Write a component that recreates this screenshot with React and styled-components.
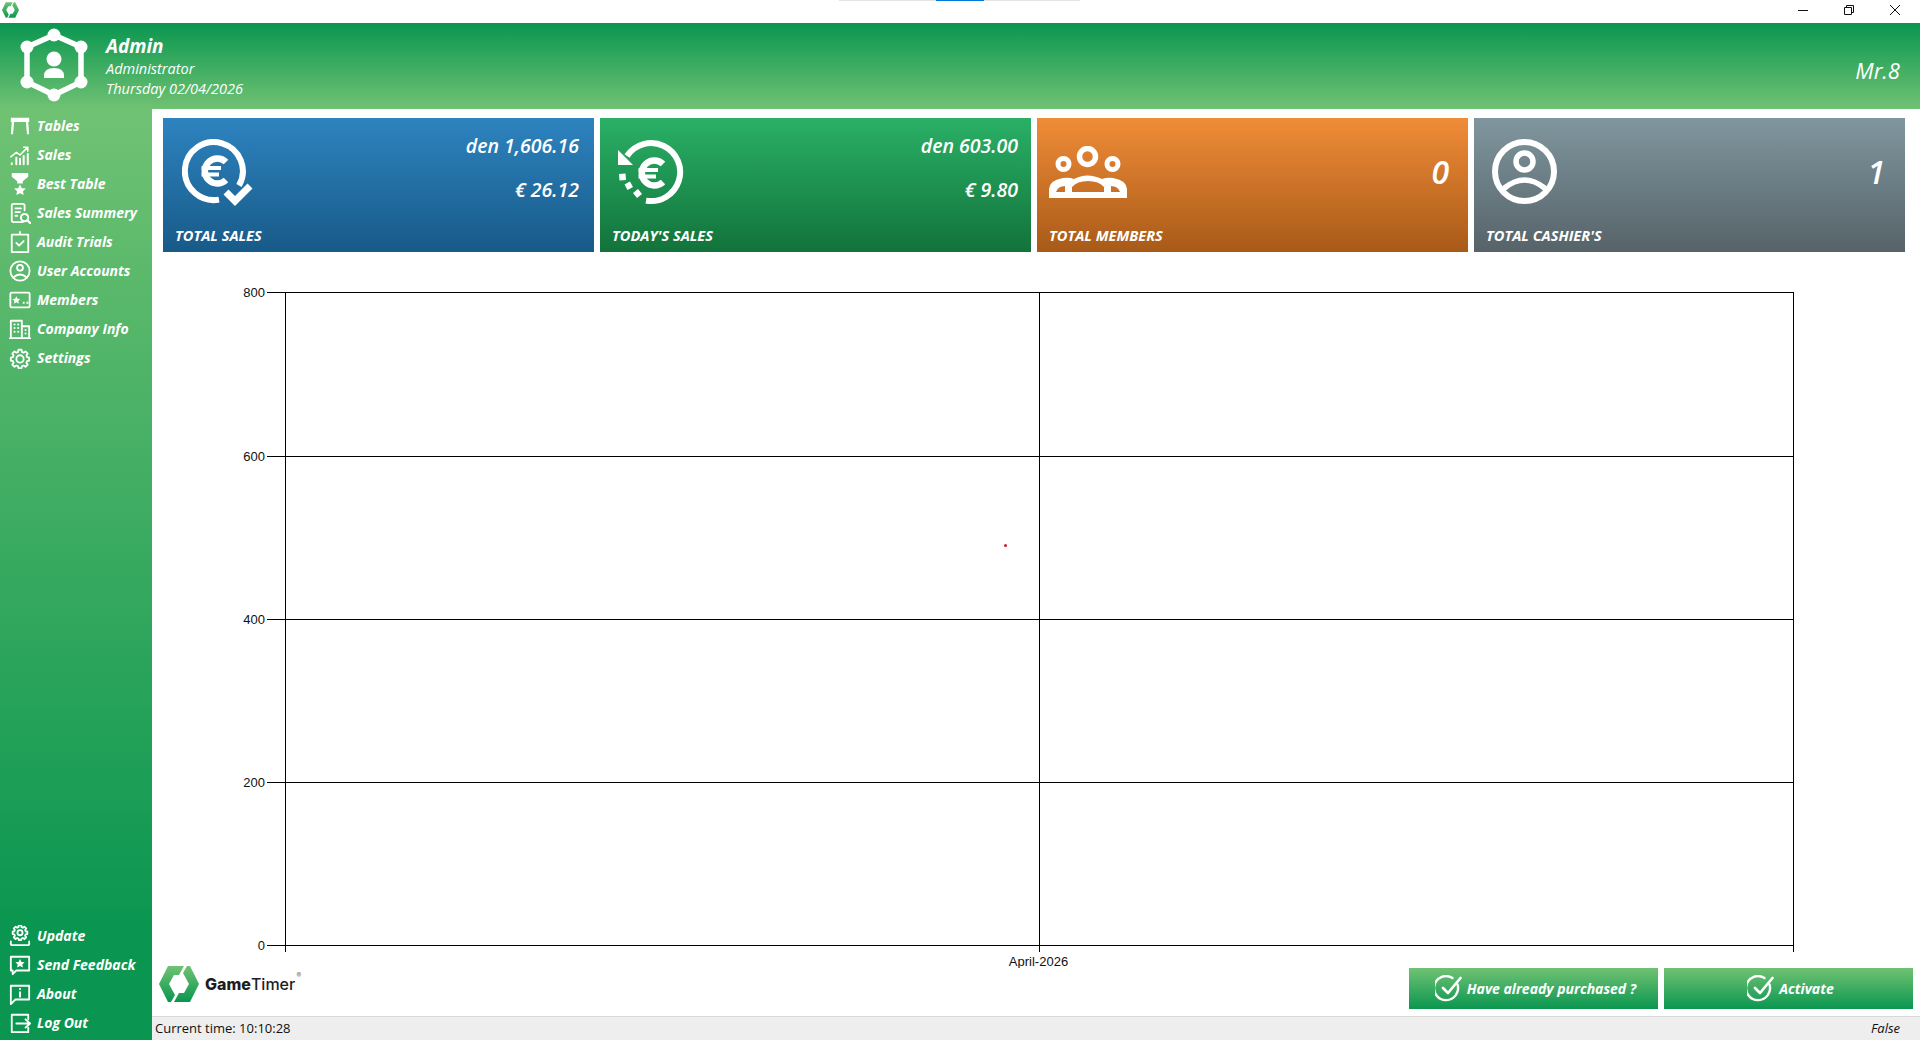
import React from "react";
import styled, { createGlobalStyle } from "styled-components";

const UI_FONT = `"Open Sans", "Noto Sans", sans-serif`;

const GlobalStyle = createGlobalStyle`
  html, body {
    margin: 0;
    padding: 0;
    height: 100%;
    overflow: hidden;
    background: #fff;
  }
  * {
    box-sizing: border-box;
  }
`;

const Page = styled.div`
  width: 1920px;
  height: 1040px;
  display: flex;
  flex-direction: column;
  font-family: ${UI_FONT};
  color: #fff;
`;

const TitleBar = styled.div`
  position: relative;
  flex: 0 0 23px;
  display: flex;
  align-items: flex-start;
  justify-content: space-between;
  padding: 2px 2px 0;
  background: #fff;
`;

const TopStrip = styled.div`
  position: absolute;
  top: 0;
  left: 839px;
  width: 241px;
  height: 1px;
  display: flex;
  justify-content: center;
  background: #e4e4e4;
`;

const TopStripActive = styled.div`
  width: 48px;
  height: 1px;
  background: #0078d7;
`;

const WindowControls = styled.div`
  display: flex;
  margin-top: -2px;
`;

const WindowButton = styled.div`
  width: 46px;
  height: 20px;
  display: flex;
  align-items: center;
  justify-content: center;
`;

const Header = styled.header`
  flex: 0 0 86px;
  display: flex;
  align-items: flex-start;
  padding: 5px 20px 0 20px;
  background: linear-gradient(#0a9650, #70c273);
`;

const UserInfo = styled.div`
  display: flex;
  flex-direction: column;
  margin-left: 18px;
  padding-top: 5px;
`;

const UserName = styled.div`
  font-size: 19px;
  line-height: 26px;
  font-weight: 700;
  font-style: italic;
`;

const UserLine = styled.div`
  font-size: 14.5px;
  line-height: 20px;
  font-style: italic;
`;

const Brand = styled.div`
  margin-left: auto;
  margin-top: 28px;
  font-size: 22px;
  line-height: 28px;
  font-style: italic;
`;

const Body = styled.div`
  flex: 1;
  display: flex;
  min-height: 0;
`;

const Sidebar = styled.nav`
  flex: 0 0 152px;
  display: flex;
  flex-direction: column;
  justify-content: space-between;
  padding: 2px 0 3px;
  background: linear-gradient(#70c273, #0a9650 88%);
`;

const NavGroup = styled.div`
  display: flex;
  flex-direction: column;
`;

const NavItem = styled.div`
  height: 29px;
  display: flex;
  align-items: center;
  gap: 6px;
  padding-left: 9px;
  font-size: 14px;
  font-weight: 700;
  font-style: italic;
  white-space: nowrap;
`;

const Main = styled.main`
  flex: 1;
  min-width: 0;
  display: flex;
  flex-direction: column;
  background: #fff;
`;

const Cards = styled.section`
  flex: 0 0 143px;
  display: grid;
  grid-template-columns: repeat(4, 431px);
  gap: 6px;
  padding: 9px 0 0 11px;
`;

const Card = styled.div`
  display: flex;
  flex-direction: column;
  justify-content: space-between;
  padding: 21px ${(p) => p.$right}px 8px 12px;
  background: linear-gradient(${(p) => p.$from}, ${(p) => p.$to});
`;

const CardTop = styled.div`
  display: flex;
  justify-content: space-between;
  align-items: flex-start;
`;

const CardIcon = styled.div`
  margin-left: ${(p) => p.$left}px;
  margin-top: ${(p) => p.$top || 0}px;
  display: flex;
`;

const Values = styled.div`
  display: flex;
  flex-direction: column;
  align-items: flex-end;
  gap: 20px;
  margin-top: -5px;
`;

const Amount = styled.div`
  font-size: 19.5px;
  line-height: 24px;
  font-weight: 600;
  font-style: italic;
`;

const BigValue = styled.div`
  margin-top: 15px;
  font-size: 32px;
  line-height: 36px;
  font-weight: 600;
  font-style: italic;
`;

const CardLabel = styled.div`
  font-size: 14.6px;
  line-height: 18px;
  font-weight: 700;
  font-style: italic;
`;

const ChartArea = styled.div`
  flex: 1;
  min-height: 0;
  display: flex;
`;

const Footer = styled.div`
  flex: 0 0 48px;
  display: flex;
  align-items: flex-start;
  padding: 0 7px 0 7px;
`;

const Logo = styled.div`
  display: flex;
  align-items: center;
  margin-top: -2px;
`;

const LogoName = styled.div`
  position: relative;
  margin-left: 6px;
  font-family: Inter, "Open Sans", sans-serif;
  font-size: 16px;
  line-height: 20px;
  color: #1d1d1f;
  font-weight: 500;
`;

const LogoStrong = styled.span`
  font-weight: 800;
`;

const LogoMark = styled.span`
  position: absolute;
  top: -3px;
  right: -6px;
  font-size: 7px;
  line-height: 10px;
  color: #777;
`;

const Actions = styled.div`
  margin-left: auto;
  display: flex;
  gap: 6px;
`;

const ActionButton = styled.button`
  width: 249px;
  height: 41px;
  border: 0;
  padding: 0 0 0 4px;
  display: flex;
  align-items: center;
  justify-content: center;
  gap: 5px;
  color: #fff;
  font-family: ${UI_FONT};
  font-size: 14px;
  font-weight: 700;
  font-style: italic;
  background: linear-gradient(#70c273, #0a9650);
`;

const StatusBar = styled.div`
  flex: 0 0 24px;
  display: flex;
  align-items: center;
  justify-content: space-between;
  padding: 0 20px 2px 3px;
  background: #eeeeee;
  border-top: 1px solid #d9d9d9;
  color: #111;
  font-size: 13px;
`;

const StatusFlag = styled.span`
  font-style: italic;
`;

const Stroke = styled.svg`
  flex: none;
  fill: none;
  stroke: ${(p) => p.$color || "#fff"};
  stroke-width: ${(p) => p.$weight || 2};
  stroke-linecap: round;
  stroke-linejoin: round;
`;

const Solid = styled.path`
  fill: #fff;
  stroke: none;
`;

const Icon = ({ children, size = 22, box = 24, weight }) => (
  <Stroke width={size} height={size} viewBox={`0 0 ${box} ${box}`} $weight={weight}>
    {children}
  </Stroke>
);

const AppGlyph = ({ width, height }) => (
  <svg width={width} height={height} viewBox="0 0 40 36">
    <defs>
      <linearGradient id={`hex${width}`} x1="0" y1="0" x2="0" y2="1">
        <stop offset="0" stopColor="#70c273" />
        <stop offset="1" stopColor="#0a9650" />
      </linearGradient>
    </defs>
    <polygon fill={`url(#hex${width})`} points="9,0 25,0 20,9 15,9 10,18 16,29 12,36 9,36 0,18" />
    <polygon fill={`url(#hex${width})`} points="31,36 15,36 20,27 25,27 30,18 24,7 28,0 31,0 40,18" />
  </svg>
);

const Avatar = () => (
  <svg width="68" height="74" viewBox="0 0 68 74">
    <polygon points="34,7 61,19 61,54 34,67 7,54 7,19" fill="none" stroke="#fff" strokeWidth="5.5" />
    <g fill="#fff">
      <circle cx="34" cy="7" r="6.5" />
      <circle cx="61" cy="19" r="6.5" />
      <circle cx="61" cy="54" r="6.5" />
      <circle cx="34" cy="67" r="6.5" />
      <circle cx="7" cy="54" r="6.5" />
      <circle cx="7" cy="19" r="6.5" />
      <circle cx="34" cy="31" r="7.5" />
      <path d="M24 50v-2q0-8 10-8t10 8v2z" />
    </g>
  </svg>
);

const gearPath =
  "M10.3 3h3.4l.5 2.5 1.7.7 2.1-1.4 2.4 2.4-1.4 2.1.7 1.7 2.3.5v3.4l-2.3.5-.7 1.7 1.4 2.1-2.4 2.4-2.1-1.4-1.7.7-.5 2.1h-3.4l-.5-2.1-1.7-.7-2.1 1.4-2.4-2.4 1.4-2.1-.7-1.7-2.3-.5v-3.4l2.3-.5.7-1.7-1.4-2.1 2.4-2.4 2.1 1.4 1.7-.7z";

const TopNav = [
  {
    label: "Tables",
    icon: (
      <Icon>
        <Solid d="M2 3h20v4.500h-1l1 13.500h-2.400l-1.200-13.500H5.600L4.400 21H2L3 7.500H2z" />
      </Icon>
    ),
  },
  {
    label: "Sales",
    icon: (
      <Icon weight={1.7}>
        <path d="M2 14l6-5 4 3 8-8M16 3.500h4.500V8" />
        <path d="M3 22v-1M8 22v-7M12 22v-6M16 22v-9M20.500 22V11" strokeWidth="2.200" />
      </Icon>
    ),
  },
  {
    label: "Best Table",
    icon: (
      <Icon>
        <Solid d="M3 0h18v4l-6 5v2.500h-6V9L3 4z" />
        <Solid d="M12 12.500l2 4 4.500.5-3.300 3 .8 4-4-2-4 2 .8-4-3.300-3 4.500-.5z" />
      </Icon>
    ),
  },
  {
    label: "Sales Summery",
    icon: (
      <Icon>
        <path d="M15 22H5a2 2 0 0 1-2-2V4a2 2 0 0 1 2-2h10a2 2 0 0 1 2 2v5" />
        <path d="M7 7h6M7 11h5M7 15h2" />
        <circle cx="17" cy="17" r="4" strokeWidth="2.200" />
        <path d="M20 20l3 3" strokeWidth="2.400" />
      </Icon>
    ),
  },
  {
    label: "Audit Trials",
    icon: (
      <Icon>
        <path d="M3 4h18v19H3zM12 1v3" />
        <path d="M8 13l3 3 5-5" />
      </Icon>
    ),
  },
  {
    label: "User Accounts",
    icon: (
      <Icon>
        <circle cx="12" cy="12" r="10.500" />
        <circle cx="12" cy="8.500" r="3.200" />
        <path d="M4.800 19q7.200-6.500 14.400 0" />
      </Icon>
    ),
  },
  {
    label: "Members",
    icon: (
      <Icon>
        <rect x="1.500" y="4" width="21" height="16" rx="1.500" />
        <Solid d="M8 8l1.300 2.700 3 .3-2.200 2 .6 3L8 14.500 5.300 16l.6-3-2.200-2 3-.3zM15 14h2v2h-2zM19 14h2v2h-2z" />
      </Icon>
    ),
  },
  {
    label: "Company Info",
    icon: (
      <Icon>
        <path d="M2 22V3h12v19zM14 9h8v13h-8M1 22h22" />
        <path d="M6 7h.1M10 7h.1M6 11h.1M10 11h.1M6 15h.1M10 15h.1M18 13h.1M18 17h.1" strokeWidth="2.200" />
      </Icon>
    ),
  },
  {
    label: "Settings",
    icon: (
      <Icon>
        <path d={gearPath} />
        <circle cx="12" cy="13" r="4" />
      </Icon>
    ),
  },
];

const BottomNav = [
  {
    label: "Update",
    icon: (
      <Icon>
        <g transform="translate(2.400 -2) scale(0.8)">
          <path d={gearPath} strokeWidth="2.500" />
          <circle cx="12" cy="13" r="3.500" strokeWidth="2.500" />
        </g>
        <path d="M2 18v3a1 1 0 0 0 1 1h18a1 1 0 0 0 1-1v-3" />
      </Icon>
    ),
  },
  {
    label: "Send Feedback",
    icon: (
      <Icon>
        <path d="M2 3h20v15H8l-4 4v-4H2z" />
        <Solid d="M12 5.500l1.600 3.200 3.400.4-2.500 2.300.7 3.400-3.200-1.700-3.200 1.700.7-3.400L7 9.100l3.400-.4z" />
      </Icon>
    ),
  },
  {
    label: "About",
    icon: (
      <Icon>
        <path d="M2 3h20v15H7l-5 5z" />
        <path d="M12 6.500h.1M12 10v5" strokeWidth="2.200" />
      </Icon>
    ),
  },
  {
    label: "Log Out",
    icon: (
      <Icon>
        <path d="M21 8V3H3v19h18v-5" />
        <path d="M8 12.500h15M18 8l5 4.500-5 4.500" />
      </Icon>
    ),
  },
];

const Euro = ({ x, y }) => (
  <g transform={`translate(${x - 32} ${y - 32})`}>
    <path d="M44 23A12.500 12.500 0 1 0 44 41" strokeWidth="6.500" strokeLinecap="butt" />
    <path d="M19.500 29H39M19.500 35.500H37" strokeWidth="4" strokeLinecap="butt" />
  </g>
);

const TotalSalesIcon = () => (
  <Icon size={71} box={71} weight={6}>
    <path d="M57 46.500A29 29 0 1 0 37 60.600" strokeLinecap="butt" />
    <Euro x={32} y={32} />
    <path d="M44 53l9 9 15-15" strokeWidth="7" strokeLinecap="butt" strokeLinejoin="miter" />
  </Icon>
);

const TodaySalesIcon = () => (
  <Icon size={66} box={66} weight={6}>
    <path d="M9 17A29 29 0 1 1 28 61.600" strokeLinecap="butt" />
    <Solid d="M0 11v15h15z" />
    <Solid d="M1 35l6.500-.5.500 6.500-6.500.5zM6.500 45.500l5.500-3 3 5.500-5.500 3zM15 54l5-4 4 5-5 4z" />
    <Euro x={33} y={34} />
  </Icon>
);

const MembersIcon = () => (
  <svg width="78" height="52" viewBox="0 0 78 52">
    <g fill="none" stroke="#fff">
      <circle cx="38.500" cy="10.500" r="8" strokeWidth="5.500" />
      <circle cx="14.500" cy="18" r="5.500" strokeWidth="5" />
      <circle cx="63.500" cy="18" r="5.500" strokeWidth="5" />
    </g>
    <path
      fill="#fff"
      fillRule="evenodd"
      d="M0 52V43Q1 34 14 32Q20 31 25 33Q38 26 53 33Q58 31 64 32Q77 34 78 43V52ZM7 46H16V40Q9 40 7 46ZM23 46H55V41Q50 35 39 35Q28 35 23 41ZM62 46H71Q69 40 62 40Z"
    />
  </svg>
);

const CashierIcon = () => (
  <Icon size={65} box={65} weight={6}>
    <circle cx="32.500" cy="32.500" r="29.500" />
    <circle cx="32.500" cy="22.500" r="8.500" strokeWidth="5.500" />
    <path d="M12.500 49Q32.500 33 52.500 49" strokeWidth="5.500" />
  </Icon>
);

const CheckCircle = () => (
  <Icon size={27} box={27} weight={2.4}>
    <path d="M22.500 9.500A12 12 0 1 1 17.500 3" />
    <path d="M8 13l5 5L25.500 3" strokeWidth="2.700" />
  </Icon>
);

const yTicks = [
  { label: "800", y: 292 },
  { label: "600", y: 456 },
  { label: "400", y: 619 },
  { label: "200", y: 782 },
  { label: "0", y: 945 },
];

const PLOT_LEFT = 285.5;
const PLOT_RIGHT = 1794;
const PLOT_MID = 1039.5;

const SalesChart = () => (
  <svg width="1768" height="716" viewBox="152 252 1768 716">
    <g stroke="#000" strokeWidth="1" shapeRendering="crispEdges">
      {yTicks.map((tick) => (
        <line key={tick.label} x1="267" x2={PLOT_RIGHT} y1={tick.y + 0.5} y2={tick.y + 0.5} />
      ))}
      <line x1={PLOT_LEFT} x2={PLOT_LEFT} y1="292" y2="952" />
      <line x1={PLOT_MID} x2={PLOT_MID} y1="292" y2="952" />
      <line x1={PLOT_RIGHT - 0.5} x2={PLOT_RIGHT - 0.5} y1="292" y2="952" />
    </g>
    <g fontFamily='"Liberation Sans", Arial, sans-serif' fontSize="13" fill="#111">
      {yTicks.map((tick) => (
        <text key={tick.label} x="265" y={tick.y + 4.5} textAnchor="end">
          {tick.label}
        </text>
      ))}
      <text x={PLOT_MID - 1} y="966" textAnchor="middle">
        April-2026
      </text>
    </g>
    <circle cx="1005.500" cy="545.500" r="1.500" fill="#d8102a" />
  </svg>
);

const NavList = ({ items }) => (
  <NavGroup>
    {items.map((item) => (
      <NavItem key={item.label}>
        {item.icon}
        {item.label}
      </NavItem>
    ))}
  </NavGroup>
);

export default function App() {
  return (
    <Page>
      <GlobalStyle />
      <TitleBar>
        <AppGlyph width={17} height={16} />
        <TopStrip>
          <TopStripActive />
        </TopStrip>
        <WindowControls>
          <WindowButton>
            <svg width="10" height="10" viewBox="0 0 10 10">
              <path d="M0 5.500h10" stroke="#111" />
            </svg>
          </WindowButton>
          <WindowButton>
            <svg width="10" height="10" viewBox="0 0 10 10" fill="none" stroke="#111">
              <path d="M.5 2.500h7v7h-7zM2.500 2.500v-2h7v7h-2" />
            </svg>
          </WindowButton>
          <WindowButton>
            <svg width="10" height="10" viewBox="0 0 10 10">
              <path d="M0 0l10 10M10 0L0 10" stroke="#111" />
            </svg>
          </WindowButton>
        </WindowControls>
      </TitleBar>
      <Header>
        <Avatar />
        <UserInfo>
          <UserName>Admin</UserName>
          <UserLine>Administrator</UserLine>
          <UserLine>Thursday 02/04/2026</UserLine>
        </UserInfo>
        <Brand>Mr.8</Brand>
      </Header>
      <Body>
        <Sidebar>
          <NavList items={TopNav} />
          <NavList items={BottomNav} />
        </Sidebar>
        <Main>
          <Cards>
            <Card $from="#2e83bf" $to="#175a88" $right={15}>
              <CardTop>
                <CardIcon $left={7}>
                  <TotalSalesIcon />
                </CardIcon>
                <Values>
                  <Amount>den 1,606.16</Amount>
                  <Amount>€ 26.12</Amount>
                </Values>
              </CardTop>
              <CardLabel>TOTAL SALES</CardLabel>
            </Card>
            <Card $from="#2ab066" $to="#12733b" $right={13}>
              <CardTop>
                <CardIcon $left={6}>
                  <TodaySalesIcon />
                </CardIcon>
                <Values>
                  <Amount>den 603.00</Amount>
                  <Amount>€ 9.80</Amount>
                </Values>
              </CardTop>
              <CardLabel>TODAY'S SALES</CardLabel>
            </Card>
            <Card $from="#f08c38" $to="#a85a18" $right={19}>
              <CardTop>
                <CardIcon $left={0} $top={7}>
                  <MembersIcon />
                </CardIcon>
                <BigValue>0</BigValue>
              </CardTop>
              <CardLabel>TOTAL MEMBERS</CardLabel>
            </Card>
            <Card $from="#80969e" $to="#566369" $right={20}>
              <CardTop>
                <CardIcon $left={6}>
                  <CashierIcon />
                </CardIcon>
                <BigValue>1</BigValue>
              </CardTop>
              <CardLabel>TOTAL CASHIER'S</CardLabel>
            </Card>
          </Cards>
          <ChartArea>
            <SalesChart />
          </ChartArea>
          <Footer>
            <Logo>
              <AppGlyph width={40} height={36} />
              <LogoName>
                <LogoStrong>Game</LogoStrong>Timer
                <LogoMark>®</LogoMark>
              </LogoName>
            </Logo>
            <Actions>
              <ActionButton>
                <CheckCircle />
                Have already purchased ?
              </ActionButton>
              <ActionButton>
                <CheckCircle />
                Activate
              </ActionButton>
            </Actions>
          </Footer>
          <StatusBar>
            <span>Current time: 10:10:28</span>
            <StatusFlag>False</StatusFlag>
          </StatusBar>
        </Main>
      </Body>
    </Page>
  );
}
